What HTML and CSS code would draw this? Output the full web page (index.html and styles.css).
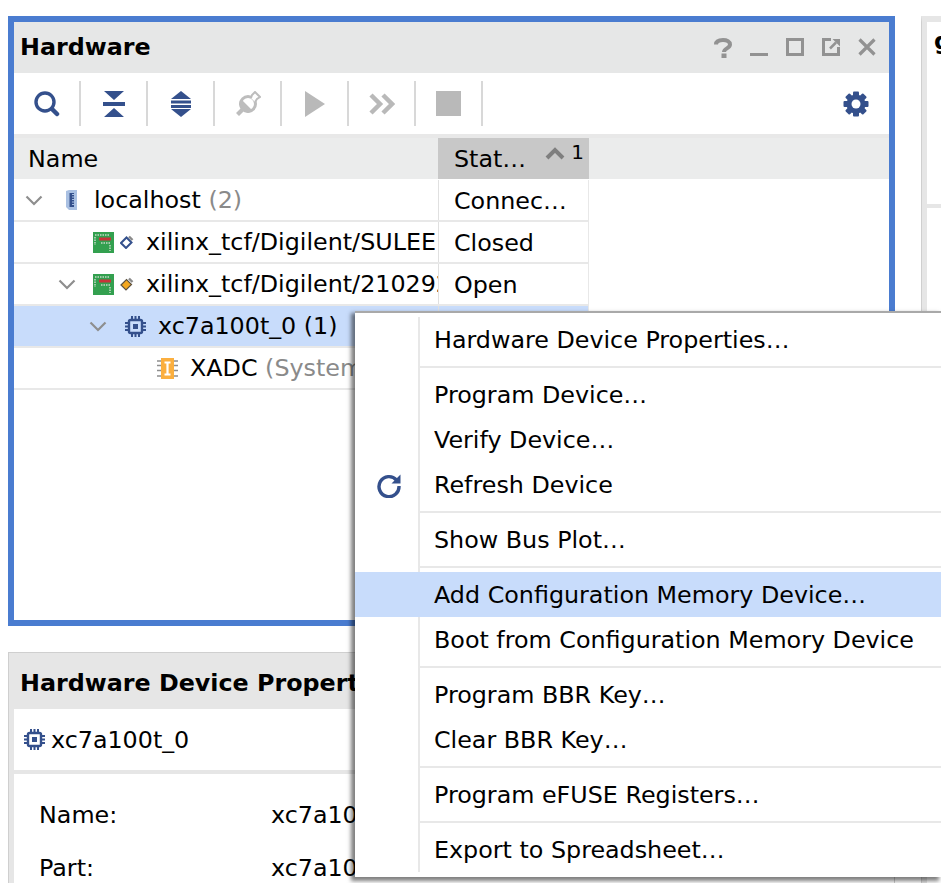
FILE: index.html
```html
<!DOCTYPE html>
<html lang="en">

<head>
	<meta charset="UTF-8">
	<title>Hardware Manager</title>
	<link rel="stylesheet" href="styles.css">
</head>

<body>

	<svg class="defs" width="0" height="0">
		<symbol id="chip" viewBox="0 0 21 21">
			<rect x="4" y="4" width="13" height="13" rx="1.5" fill="none" stroke="#34508c" stroke-width="2.4" />
			<rect x="8" y="8" width="5" height="5" fill="#34508c" />
			<path d="M7 0v3M10.500 0v3M14 0v3M7 18v3M10.500 18v3M14 18v3M0 7h3M0 10.500h3M0 14h3M18 7h3M18 10.500h3M18 14h3" stroke="#34508c" stroke-width="2" />
		</symbol>
		<symbol id="board" viewBox="0 0 21 21">
			<rect width="21" height="21" fill="#33a04f" />
			<rect x="6" y="5.500" width="12" height="3" fill="#c8333a" />
			<path d="M2 3h14M2 5v8M8 11h9M17 13v6" stroke="#c6d8c6" stroke-width="1.500" stroke-dasharray="1.500 1" fill="none" />
		</symbol>
		<symbol id="chevron" viewBox="0 0 18 11">
			<path d="M1.500 1.500 9 9l7.500-7.500" fill="none" stroke="#8e8e8e" stroke-width="2.200" />
		</symbol>
	</svg>

	<div class="page">
		<div class="left-col">

			<section class="hw-panel">
				<header class="title-bar">
					<h2 class="panel-title">Hardware</h2>
					<div class="win-btns">
						<svg width="18" height="20" viewBox="0 0 18 20">
							<path d="M2 6.500C2 3 5 2 9 2s7 1.600 7 4.500c0 4-6 3.700-6 7.500" fill="none" stroke="#929292" stroke-width="4" />
							<rect x="7.500" y="15.500" width="5" height="4.500" fill="#929292" />
						</svg>
						<svg width="18" height="20" viewBox="0 0 18 20">
							<rect y="15" width="18" height="3" fill="#929292" />
						</svg>
						<svg width="18" height="20" viewBox="0 0 18 20">
							<rect x="1.500" y="1.500" width="15" height="15" fill="none" stroke="#929292" stroke-width="3" />
						</svg>
						<svg width="18" height="20" viewBox="0 0 18 20">
							<path d="M9 1.500H1.500v15h15V9" fill="none" stroke="#929292" stroke-width="3" />
							<path d="M8 10.500 14 4.500" stroke="#929292" stroke-width="2.500" />
							<path d="M10.500 1h7.500v7.500z" fill="#929292" />
						</svg>
						<svg width="18" height="20" viewBox="0 0 18 20">
							<path d="M1.500 1.500l15 15M16.500 1.500l-15 15" stroke="#929292" stroke-width="3.200" />
						</svg>
					</div>
				</header>

				<div class="toolbar">
					<span class="tool">
						<svg width="26" height="26" viewBox="0 0 26 26">
							<circle cx="11" cy="11" r="9" fill="none" stroke="#34508c" stroke-width="3.400" />
							<path d="M18 18l5 5" stroke="#34508c" stroke-width="4.500" stroke-linecap="round" />
						</svg>
					</span>
					<span class="tool">
						<svg width="22" height="26" viewBox="0 0 22 26">
							<path d="M1 0h20l-10 9zM11 17l10 9H1z" fill="#34508c" />
							<rect y="11" width="22" height="4" fill="#34508c" />
						</svg>
					</span>
					<span class="tool">
						<svg width="22" height="26" viewBox="0 0 22 26">
							<path d="M11 0l10 8H1zM1 18h20l-10 8z" fill="#34508c" />
							<rect x="1" y="9.500" width="20" height="3" fill="#34508c" />
							<rect x="1" y="14" width="20" height="3" fill="#34508c" />
						</svg>
					</span>
					<span class="tool">
						<svg width="26" height="26" viewBox="0 0 26 26">
							<circle cx="13" cy="13" r="7.500" fill="none" stroke="#bdbdbd" stroke-width="3" />
							<path d="M6 8 4 13l2 4-5 5 3 3 5-5 4 2 5-2L7 9z" fill="#bdbdbd" />
							<path d="M16 7l1-3 3-3 5 5-3 2-2 3" fill="#fff" stroke="#bdbdbd" stroke-width="2" />
						</svg>
					</span>
					<span class="tool">
						<svg width="20" height="26" viewBox="0 0 20 26">
							<path d="M0 0l20 13L0 26z" fill="#b9b9b9" />
						</svg>
					</span>
					<span class="tool">
						<svg width="26" height="22" viewBox="0 0 26 22">
							<path d="M2 2l9 9-9 9M14 2l9 9-9 9" fill="none" stroke="#b9b9b9" stroke-width="4.500" />
						</svg>
					</span>
					<span class="tool">
						<span class="stop-box"></span>
					</span>
					<span class="tool-gear">
						<svg width="26" height="26" viewBox="0 0 26 26">
							<g fill="#34508c">
								<circle cx="13" cy="13" r="9.500" />
								<rect x="10" y="0.500" width="6" height="25" rx="1" />
								<rect x="10" y="0.500" width="6" height="25" rx="1" transform="rotate(45 13 13)" />
								<rect x="10" y="0.500" width="6" height="25" rx="1" transform="rotate(90 13 13)" />
								<rect x="10" y="0.500" width="6" height="25" rx="1" transform="rotate(135 13 13)" />
							</g>
							<circle cx="13" cy="13" r="4.500" fill="#fff" />
						</svg>
					</span>
				</div>

				<div class="tree-table">
					<div class="tree-head">
						<div class="head-name">Name</div>
						<div class="head-status">
							<span>Stat…</span>
							<svg class="sort-arrow" width="20" height="13" viewBox="0 0 20 13">
								<path d="M2 11l8-8 8 8" fill="none" stroke="#7f7f7f" stroke-width="4" />
							</svg>
							<span class="sort-num">1</span>
						</div>
					</div>

					<div class="tree-row">
						<div class="cell-name lvl-0">
							<span class="arrow"><svg width="18" height="11"><use href="#chevron" /></svg></span>
							<svg width="22" height="22" viewBox="0 0 22 22">
								<path d="M6 2l3-1h8v20H9l-3-3z" fill="#a9c0e2" />
								<path d="M9.500 4H14v14H9.500z" fill="#34508c" />
								<path d="M12 5.500h2M12 8h2M12 10.500h2M12 13h2M12 15.500h2" stroke="#a9c0e2" stroke-width="1" />
							</svg>
							<span class="node-text">localhost <span class="muted">(2)</span></span>
						</div>
						<div class="cell-status">Connec…</div>
					</div>

					<div class="tree-row">
						<div class="cell-name lvl-1">
							<span class="arrow"></span>
							<svg width="21" height="21"><use href="#board" /></svg>
							<svg class="ico-usb" width="14" height="14" viewBox="0 0 14 14">
								<path d="M1 8 6.500 2.500 11.500 7.500 6 13z" fill="#fff" stroke="#34508c" stroke-width="2" />
								<path d="M9 1.500l3.500 3.500" stroke="#8a8a8a" stroke-width="2.400" />
							</svg>
							<span class="node-text">xilinx_tcf/Digilent/SULEE</span>
						</div>
						<div class="cell-status">Closed</div>
					</div>

					<div class="tree-row">
						<div class="cell-name lvl-1">
							<span class="arrow"><svg width="18" height="11"><use href="#chevron" /></svg></span>
							<svg width="21" height="21"><use href="#board" /></svg>
							<svg class="ico-usb" width="14" height="14" viewBox="0 0 14 14">
								<path d="M1 8 6.500 2.500 11.500 7.500 6 13z" fill="#f4a71f" stroke="#5c5140" stroke-width="1.200" />
								<path d="M9 1.500l3.500 3.500" stroke="#8a8a8a" stroke-width="2.400" />
							</svg>
							<span class="node-text">xilinx_tcf/Digilent/210292</span>
						</div>
						<div class="cell-status">Open</div>
					</div>

					<div class="tree-row selected">
						<div class="cell-name lvl-2">
							<span class="arrow"><svg width="18" height="11"><use href="#chevron" /></svg></span>
							<svg width="21" height="21"><use href="#chip" /></svg>
							<span class="node-text">xc7a100t_0 (1)</span>
						</div>
						<div class="cell-status"></div>
					</div>

					<div class="tree-row">
						<div class="cell-name lvl-3">
							<span class="arrow"></span>
							<svg width="21" height="21" viewBox="0 0 21 21">
								<path d="M0 3h21M0 7.500h21M0 12.500h21M0 18h21" stroke="#8e8e8e" stroke-width="1.500" />
								<rect x="4" y="0" width="13" height="21" fill="#fbaf3f" />
								<path d="M7.500 4.500h6M7.500 16.500h6M10.500 4.500v12" stroke="#fff" stroke-width="2.200" />
							</svg>
							<span class="node-text">XADC <span class="muted">(System Monitor)</span></span>
						</div>
						<div class="cell-status"></div>
					</div>
				</div>
			</section>

			<section class="props-panel">
				<h2 class="props-title">Hardware Device Properties</h2>
				<div class="props-sub">
					<svg width="21" height="21"><use href="#chip" /></svg>
					<span>xc7a100t_0</span>
				</div>
				<div class="props-body">
					<div class="prop-row"><span class="prop-key">Name:</span><span>xc7a100t_0</span></div>
					<div class="prop-row"><span class="prop-key">Part:</span><span>xc7a100t</span></div>
				</div>
			</section>
		</div>

		<section class="side-panel">
			<h2 class="side-title">g</h2>
			<div class="side-line"></div>
		</section>
	</div>

	<ul class="ctx-menu">
		<li class="ctx-item"><span class="gutter"></span><span class="ctx-label">Hardware Device Properties…</span></li>
		<li class="ctx-sep"></li>
		<li class="ctx-item"><span class="gutter"></span><span class="ctx-label">Program Device…</span></li>
		<li class="ctx-item"><span class="gutter"></span><span class="ctx-label">Verify Device…</span></li>
		<li class="ctx-item">
			<span class="gutter">
				<svg width="26" height="26" viewBox="0 0 26 26">
					<path d="M20.500 8A10 10 0 1 0 23 14" fill="none" stroke="#34508c" stroke-width="3.400" />
					<path d="M24.500 2.500v9h-9z" fill="#34508c" />
				</svg>
			</span>
			<span class="ctx-label">Refresh Device</span>
		</li>
		<li class="ctx-sep"></li>
		<li class="ctx-item"><span class="gutter"></span><span class="ctx-label">Show Bus Plot…</span></li>
		<li class="ctx-sep"></li>
		<li class="ctx-item active"><span class="gutter"></span><span class="ctx-label">Add Configuration Memory Device…</span></li>
		<li class="ctx-item"><span class="gutter"></span><span class="ctx-label">Boot from Configuration Memory Device</span></li>
		<li class="ctx-sep"></li>
		<li class="ctx-item"><span class="gutter"></span><span class="ctx-label">Program BBR Key…</span></li>
		<li class="ctx-item"><span class="gutter"></span><span class="ctx-label">Clear BBR Key…</span></li>
		<li class="ctx-sep"></li>
		<li class="ctx-item"><span class="gutter"></span><span class="ctx-label">Program eFUSE Registers…</span></li>
		<li class="ctx-sep"></li>
		<li class="ctx-item"><span class="gutter"></span><span class="ctx-label">Export to Spreadsheet…</span></li>
	</ul>

</body>

</html>
```

FILE: styles.css
```css
html,
body {
	margin: 0;
	height: 883px;
	overflow: hidden;
	background-color: #fff;
}

body {
	font-family: "DejaVu Sans", sans-serif;
	font-size: 23.8px;
	color: #000;
}

.defs {
	position: absolute;
}

.page {
	display: flex;
	gap: 26px;
	padding: 16px 0 0 8px;
}

.left-col {
	flex: 0 0 887px;
	width: 887px;
}

/* hardware panel */
.hw-panel {
	box-sizing: border-box;
	height: 610px;
	border: 6px solid #4a7cd0;
	background-color: #fff;
}

.title-bar {
	display: flex;
	align-items: center;
	justify-content: space-between;
	box-sizing: border-box;
	height: 51px;
	padding: 0 13px 2px 6px;
	background-color: #e6e7e7;
}

.panel-title {
	margin: 0;
	font-size: 23.8px;
	font-weight: bold;
}

.win-btns {
	display: flex;
	gap: 18px;
	margin-top: 2px;
}

.toolbar {
	display: flex;
	align-items: center;
	box-sizing: border-box;
	height: 65px;
	border-bottom: 4px solid #e8e8e8;
}

.tool {
	display: flex;
	align-items: center;
	justify-content: center;
	box-sizing: border-box;
	width: 67px;
	height: 45px;
	border-right: 2px solid #d8d8d8;
}

.tool-gear {
	display: flex;
	margin-left: auto;
	margin-right: 20px;
}

.stop-box {
	width: 25px;
	height: 25px;
	background-color: #b9b9b9;
}

.tree-head {
	display: flex;
	height: 41px;
	margin-bottom: 1px;
	background-color: #ebecec;
}

.head-name {
	box-sizing: border-box;
	width: 424px;
	padding: 7px 0 0 14px;
}

.head-status {
	display: flex;
	box-sizing: border-box;
	width: 151px;
	padding: 7px 5px 0 16px;
	background-color: #c8c8c8;
}

.sort-arrow {
	flex: none;
	margin: 2px 6px 0 auto;
}

.sort-num {
	font-size: 20px;
	margin-top: -5px;
}

.tree-row {
	display: flex;
	box-sizing: border-box;
	width: 575px;
	height: 42px;
	border-bottom: 2px solid #e8e8e8;
}

.tree-row.selected {
	background-color: #c8dcfb;
}

.cell-name {
	display: flex;
	align-items: center;
	box-sizing: border-box;
	width: 424px;
	overflow: hidden;
	white-space: nowrap;
}

.lvl-0 {
	padding-left: 11px;
}

.lvl-1 {
	padding-left: 44px;
}

.lvl-2 {
	padding-left: 75px;
}

.lvl-3 {
	padding-left: 108px;
}

.arrow {
	display: flex;
	flex: 0 0 35px;
}

.lvl-2 .arrow {
	flex-basis: 36px;
}

.cell-name svg {
	flex: none;
}

.ico-usb {
	margin-left: 6px;
}

.node-text {
	margin-left: 12px;
}

.muted {
	color: #8a8a8a;
}

.cell-status {
	box-sizing: border-box;
	width: 151px;
	padding: 7px 0 0 15px;
	border-left: 1px solid #e0e0e0;
	border-right: 1px solid #e8e8e8;
	white-space: nowrap;
}

/* properties panel */
.props-panel {
	box-sizing: border-box;
	height: 231px;
	margin-top: 26px;
	overflow: hidden;
	border: 1px solid #cfcfcf;
	border-bottom: none;
	background-color: #e6e6e6;
	padding: 6px 0 0 5px;
}

.props-title {
	margin: 0;
	height: 50px;
	line-height: 48px;
	padding-left: 6px;
	font-size: 23.8px;
	font-weight: bold;
	white-space: nowrap;
}

.props-sub {
	display: flex;
	align-items: center;
	gap: 6px;
	height: 61px;
	padding-left: 10px;
	background-color: #fff;
	margin-bottom: 4px;
}

.props-body {
	padding: 15px 0 0 25px;
	height: 200px;
	background-color: #fff;
}

.prop-row {
	display: flex;
	height: 53px;
	line-height: 53px;
}

.prop-key {
	width: 232px;
}

/* panel on the right */
.side-panel {
	box-sizing: border-box;
	flex: 0 0 20px;
	height: 867px;
	overflow: hidden;
	border-left: 1px solid #cfcfcf;
	border-top: 6px solid #e6e6e6;
	box-shadow: inset 5px 0 0 #e6e6e6;
	padding: 5px 0 0 12px;
}

.side-title {
	margin: 0;
	height: 51px;
	font-size: 23.8px;
	font-weight: bold;
}

.side-line {
	height: 4px;
	margin: 126px 0 0 -7px;
	background-color: #e6e6e6;
}

/* context menu */
.ctx-menu {
	position: absolute;
	left: 355px;
	top: 311px;
	box-sizing: border-box;
	width: 586px;
	height: 566px;
	margin: 0;
	padding: 4px 0 5px;
	list-style: none;
	background-color: #fff;
	border-top: 2px solid #a9a9a9;
	box-shadow: -3px 3px 4px 1px rgba(0, 0, 0, 0.5);
}

.ctx-item {
	display: flex;
	height: 45px;
	line-height: 47px;
	white-space: nowrap;
}

.ctx-item.active {
	background-color: #c8dcfb;
}

.gutter {
	display: flex;
	align-items: center;
	justify-content: center;
	box-sizing: border-box;
	flex: 0 0 65px;
	padding-left: 4px;
	border-right: 2px solid #e8e8e8;
}

.ctx-item.active .gutter {
	border-right-color: transparent;
}

.ctx-label {
	padding-left: 14px;
}

.ctx-sep {
	height: 10px;
	margin-left: 63px;
	border-left: 2px solid #e8e8e8;
	background: linear-gradient(#e8e8e8, #e8e8e8) center / 100% 2px no-repeat;
}
```
